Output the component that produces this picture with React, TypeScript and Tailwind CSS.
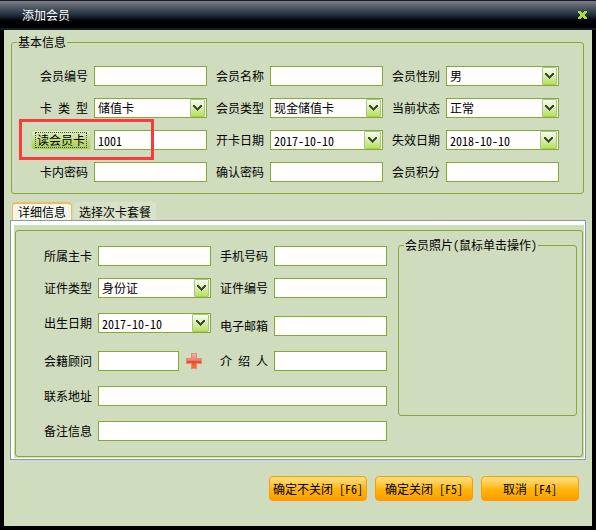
import React, { useId, useState } from 'react';

const box =
  'h-5 w-full min-w-0 rounded-none border border-[#84aa33] bg-white px-[3px] text-xs leading-4 text-black outline-none';

function Label({ htmlFor, text }: { htmlFor: string; text: string }) {
  return (
    <label htmlFor={htmlFor} className="flex h-5 items-center justify-end pr-1.5 whitespace-nowrap">
      <span className="w-12 [text-align-last:justify]">{text}</span>
    </label>
  );
}

function Chevron() {
  return (
    <svg viewBox="0 0 9 7" className="h-[7px] w-[9px]" shapeRendering="crispEdges" aria-hidden="true">
      <path
        fill="#3f4a3a"
        d="M0 0h2v1h1v1h1v1h1v-1h1v-1h1v-1h2v2h-1v1h-1v1h-1v1h-1v1h-1v-1h-1v-1h-1v-1h-1v-1h-1z"
      />
    </svg>
  );
}

const arrowFace =
  'absolute top-px bottom-px flex items-center justify-center rounded-[1px] border border-[#a9c67c] bg-linear-to-b from-[#f8fcf0] via-[#d9eeb0] to-[#b5e354]';

function TextField({ label }: { label: string }) {
  const id = useId();
  return (
    <>
      <Label htmlFor={id} text={label} />
      <input id={id} type="text" className={box} />
    </>
  );
}

function SelectField({ label, options }: { label: string; options: string[] }) {
  const id = useId();
  return (
    <>
      <Label htmlFor={id} text={label} />
      <div className="relative h-5">
        <select id={id} className={`${box} block appearance-none`}>
          {options.map((o) => (
            <option key={o}>{o}</option>
          ))}
        </select>
        <span className={`${arrowFace} pointer-events-none right-[2px] w-[15px]`}>
          <Chevron />
        </span>
      </div>
    </>
  );
}

function DateField({ label, value }: { label: string; value: string }) {
  const id = useId();
  return (
    <>
      <Label htmlFor={id} text={label} />
      <div className="relative h-5">
        <input id={id} type="text" defaultValue={value} className={`${box} block`} />
        <button type="button" aria-label={label} className={`${arrowFace} right-[2px] w-[17px]`}>
          <Chevron />
        </button>
      </div>
    </>
  );
}

function ActionButton({ children }: { children: React.ReactNode }) {
  return (
    <button
      type="button"
      className="h-[25px] w-[98px] rounded-[4px] border border-[#ff9c00] bg-linear-to-b from-[#ffe27a] via-[#ffb80c] to-[#ff9c00] whitespace-nowrap"
    >
      {children}
    </button>
  );
}

function PlusIcon() {
  return (
    <svg viewBox="0 0 16 16" className="size-4" shapeRendering="crispEdges" aria-hidden="true">
      <defs>
        <linearGradient id="plus-fill" x1="0" y1="0" x2="0" y2="1">
          <stop offset="0" stopColor="#f3b3a4" />
          <stop offset="0.45" stopColor="#ee8270" />
          <stop offset="0.55" stopColor="#e8452c" />
          <stop offset="0.8" stopColor="#ff6a12" />
          <stop offset="1" stopColor="#e0705c" />
        </linearGradient>
      </defs>
      <path fill="url(#plus-fill)" stroke="#e58a7b" strokeWidth="1" d="M5.500 .5h5v5h5v5h-5v5h-5v-5h-5v-5h5z" />
    </svg>
  );
}

const frame = 'min-w-0 rounded-[3px] border border-[#84aa33]';

export default function App() {
  const [tab, setTab] = useState(0);
  const cardId = useId();
  const advisorId = useId();
  const addressId = useId();
  const remarkId = useId();

  return (
    <main className="bg-black font-['Noto_Sans_Mono_CJK_SC','Noto_Sans_CJK_SC',sans-serif] text-xs leading-4 text-black">
      <header className="flex h-[30px] items-center justify-between border-t border-b-2 border-t-[#1a1d24] border-b-[#101c28] bg-linear-to-b from-[#7c808a] via-[#1d2935] via-55% to-black to-85% pr-[9px] pl-[22px]">
        <h1 className="text-white">添加会员</h1>
        <button type="button" aria-label="关闭" className="flex">
          <svg viewBox="0 0 9 8" className="h-2 w-[9px]" shapeRendering="crispEdges" aria-hidden="true">
            <path
              fill="#acd940"
              d="M0 0h3v1h1v1h1v-1h1v-1h3v2h-1v1h-1v2h1v1h1v2h-3v-1h-1v-1h-1v1h-1v1h-3v-2h1v-1h1v-2h-1v-1h-1z"
            />
          </svg>
        </button>
      </header>

      <div className="mx-1 border-b-4 border-black bg-[#cfdcbd] pt-1 pb-[25px]">
        <fieldset className={`${frame} mr-2 ml-[7px]`}>
          <legend className="ml-[5px] px-px">基本信息</legend>
          <div className="grid grid-cols-[63px_1fr_63px_1fr_63px_1fr] gap-y-3 pt-4 pr-6 pb-[11px] pl-[19px]">
            <TextField label="会员编号" />
            <TextField label="会员名称" />
            <SelectField label="会员性别" options={['男', '女']} />

            <SelectField label="卡 类 型" options={['储值卡']} />
            <SelectField label="会员类型" options={['现金储值卡']} />
            <SelectField label="当前状态" options={['正常']} />

            <div className="relative pr-[3px]">
              <button
                type="button"
                className="h-5 w-full rounded-[3px] border border-[#c5dd8f] bg-linear-to-b from-[#e4f0c4] via-[#c3dd80] to-[#a9cd4a] px-[3px]"
              >
                <span className="flex h-4 items-center justify-center border border-dotted border-[#3a3a6a] whitespace-nowrap">
                  <span id={cardId}>读会员卡</span>
                </span>
              </button>
              <div className="pointer-events-none absolute -top-[11px] -left-3 z-10 h-[41px] w-[135px] border-3 border-[#fc3b39]" />
            </div>
            <input type="text" aria-labelledby={cardId} defaultValue="1001" className={box} />
            <DateField label="开卡日期" value="2017-10-10" />
            <DateField label="失效日期" value="2018-10-10" />

            <TextField label="卡内密码" />
            <TextField label="确认密码" />
            <TextField label="会员积分" />
          </div>
        </fieldset>

        <div role="tablist" className="mt-2 ml-2 flex gap-[2px]">
          {['详细信息', '选择次卡套餐'].map((name, i) => (
            <button
              key={name}
              type="button"
              role="tab"
              aria-selected={tab === i}
              onClick={() => setTab(i)}
              className={
                tab === i
                  ? 'h-[18px] rounded-t-[4px] border border-t-2 border-b-0 border-[#f3b95f] bg-[#f4f6ee] px-[5px]'
                  : 'h-[18px] rounded-t-[4px] border border-b-0 border-[#d9e3cc] bg-[#d7e2c9] px-1'
              }
            >
              {name}
            </button>
          ))}
        </div>

        <div className="mr-1.5 ml-1.5 border border-[#8e9a98] bg-white pt-1 pr-px pb-px pl-[3px] shadow-[1px_2px_0_#d5d8cc]">
          <div className="bg-[#cfdcbd] px-px pt-[5px] pb-px">
            <section aria-label="详细信息" className={`${frame} flex pr-[5px]`}>
              <div className="grid flex-1 grid-cols-[82px_1fr_63px_1fr] grid-rows-[20px_23px_26px_23px_23px_20px] items-start gap-y-3 py-[15px]">
                <TextField label="所属主卡" />
                <TextField label="手机号码" />

                <SelectField label="证件类型" options={['身份证']} />
                <TextField label="证件编号" />

                <DateField label="出生日期" value="2017-10-10" />
                <div className="col-span-2 grid grid-cols-[63px_1fr] self-center">
                  <TextField label="电子邮箱" />
                </div>

                <Label htmlFor={advisorId} text="会籍顾问" />
                <div className="flex items-center gap-[7px] pr-[9px]">
                  <input id={advisorId} type="text" className={`${box} flex-1`} />
                  <button type="button" aria-label="添加会籍顾问" className="size-4 shrink-0">
                    <PlusIcon />
                  </button>
                </div>
                <TextField label="介 绍 人" />

                <Label htmlFor={addressId} text="联系地址" />
                <input id={addressId} type="text" className={`${box} col-span-3`} />

                <Label htmlFor={remarkId} text="备注信息" />
                <input id={remarkId} type="text" className={`${box} col-span-3`} />
              </div>

              <fieldset className={`${frame} mt-1.5 ml-[11px] h-[179px] w-[179px]`}>
                <legend className="ml-[5px] px-px whitespace-nowrap">会员照片(鼠标单击操作)</legend>
              </fieldset>
            </section>
          </div>
        </div>

        <div className="mt-4 flex justify-end gap-2 pr-[13px]">
          <ActionButton>确定不关闭 [F6]</ActionButton>
          <ActionButton>确定关闭 [F5]</ActionButton>
          <ActionButton>取消 [F4]</ActionButton>
        </div>
      </div>
    </main>
  );
}
